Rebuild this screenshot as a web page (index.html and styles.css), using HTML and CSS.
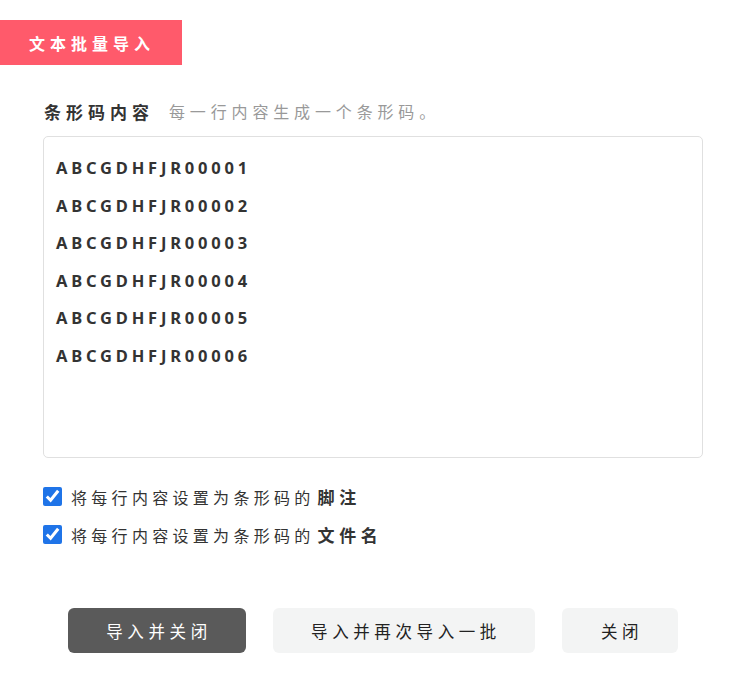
FILE: index.html
```html
<!DOCTYPE html>
<html lang="zh">
<head>
<meta charset="utf-8">
<title>文本批量导入</title>
<link rel="stylesheet" href="styles.css">
</head>
<body>
<div class="page">
  <div class="tab">文本批量导入</div>
  <div class="content">
    <div class="label-row">
      <span class="label">条形码内容</span>
      <span class="hint">每一行内容生成一个条形码。</span>
    </div>
    <div class="textbox">
      <div class="line">ABCGDHFJR00001</div>
      <div class="line">ABCGDHFJR00002</div>
      <div class="line">ABCGDHFJR00003</div>
      <div class="line">ABCGDHFJR00004</div>
      <div class="line">ABCGDHFJR00005</div>
      <div class="line">ABCGDHFJR00006</div>
    </div>
    <div class="options">
      <label class="opt"><input type="checkbox" checked><span>将每行内容设置为条形码的<b>脚注</b></span></label>
      <label class="opt"><input type="checkbox" checked><span>将每行内容设置为条形码的<b>文件名</b></span></label>
    </div>
  </div>
  <div class="actions">
    <button class="btn btn-dark">导入并关闭</button>
    <button class="btn btn-light btn-wide">导入并再次导入一批</button>
    <button class="btn btn-light btn-small">关闭</button>
  </div>
</div>
</body>
</html>
```
FILE: styles.css
```css
* { box-sizing: border-box; }
html, body { margin: 0; padding: 0; background: #fff; }
body {
  font-family: "Noto Sans", "Noto Sans CJK SC", sans-serif;
  color: #333;
}
.page { padding-top: 20px; }
.tab {
  width: 182px;
  height: 45px;
  background: #ff5a6b;
  color: #fff;
  font-weight: 700;
  font-size: 16px;
  letter-spacing: 5px;
  display: flex;
  align-items: center;
  justify-content: center;
  padding-left: 2px;
}
.content { padding: 0 43px; }
.label-row {
  margin-top: 33px;
  height: 26px;
  display: flex;
  align-items: center;
  gap: 15px;
}
.label {
  font-size: 17px;
  font-weight: 700;
  letter-spacing: 5px;
  color: #333;
  padding-left: 1px;
}
.hint {
  font-size: 16px;
  letter-spacing: 4.85px;
  color: #999;
}
.textbox {
  margin-top: 12px;
  height: 322px;
  border: 1px solid #e0e0e0;
  border-radius: 5px;
  padding: 12px 12px;
}
.line {
  height: 37.5px;
  line-height: 37.5px;
  font-size: 16.5px;
  font-weight: 700;
  letter-spacing: 3.8px;
  color: #333;
}
.options {
  margin-top: 29px;
  display: flex;
  flex-direction: column;
  gap: 19px;
}
.opt {
  display: flex;
  align-items: center;
  gap: 9px;
  font-size: 16px;
  letter-spacing: 4.3px;
  color: #333;
  height: 19px;
}
.opt input {
  margin: 0;
  width: 19px;
  height: 19px;
  accent-color: #1f74e8;
}
.opt b { font-weight: 700; font-size: 17px; letter-spacing: 4.6px; margin-left: 3px; }
.actions {
  margin-top: 64px;
  padding-left: 68px;
  display: flex;
  gap: 27px;
}
.btn {
  height: 45px;
  border: none;
  border-radius: 6px;
  font-family: "Noto Sans", "Noto Sans CJK SC", sans-serif;
  font-size: 16.5px;
  letter-spacing: 4.6px;
  padding: 0 0 0 4px;
}
.btn-dark { width: 178px; background: #5a5a5a; color: #fff; }
.btn-light { background: #f3f4f4; color: #222; }
.btn-wide { width: 262px; }
.btn-small { width: 116px; }
```
